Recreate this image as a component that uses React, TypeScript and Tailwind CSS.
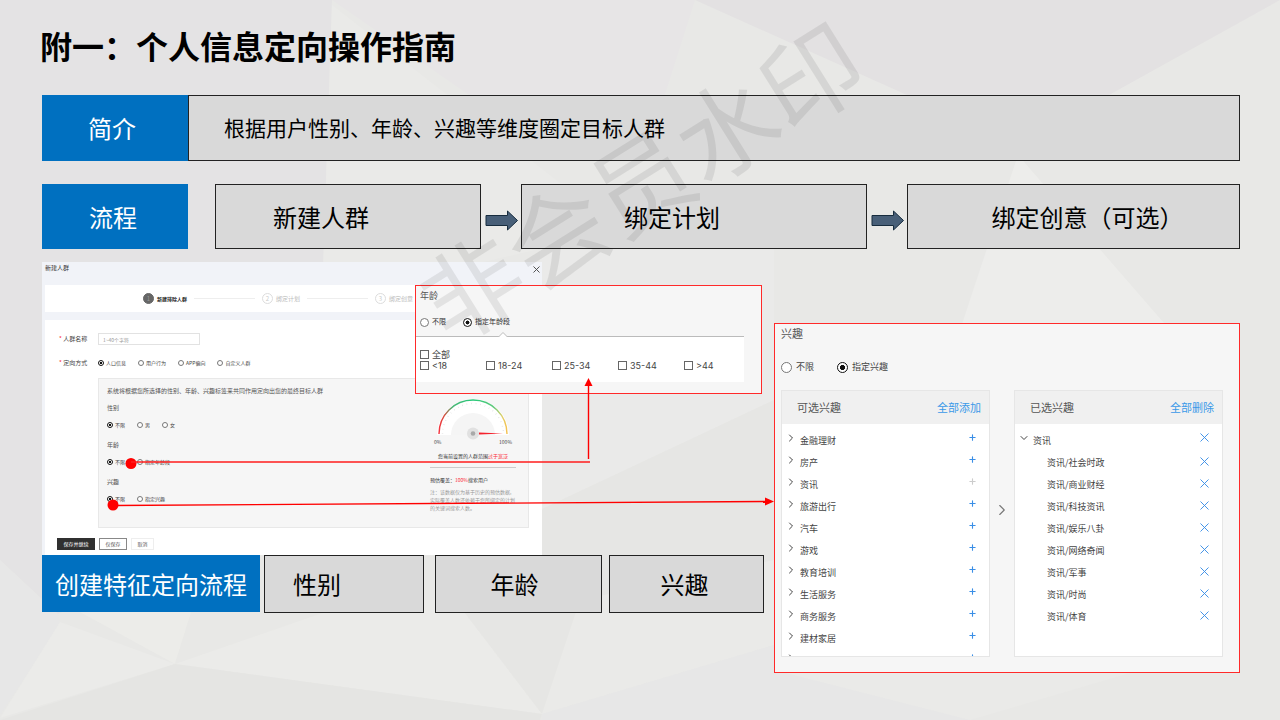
import React from "react";

import { ChevronDown, ChevronRight, Plus, X } from "lucide-react";

const interests = [
  "金融理财",
  "房产",
  "资讯",
  "旅游出行",
  "汽车",
  "游戏",
  "教育培训",
  "生活服务",
  "商务服务",
  "建材家居",
  "休闲娱乐",
];

const selectedInterests = [
  "社会时政",
  "商业财经",
  "科技资讯",
  "娱乐八卦",
  "网络奇闻",
  "军事",
  "时尚",
  "体育",
];

const ages = ["<18", "18-24", "25-34", "35-44", ">44"];

type RadioSize = "sm" | "md" | "lg";

const radioStyles: Record<RadioSize, { label: string; input: string }> = {
  sm: { label: "gap-[2px] text-[5px] leading-[8px] text-[#444]", input: "w-[6px] h-[6px]" },
  md: { label: "gap-[3px] text-[7px] leading-[10px] text-[#333]", input: "w-[9px] h-[9px]" },
  lg: { label: "gap-1 text-[9px] leading-[14px] text-[#444]", input: "w-[11px] h-[11px]" },
};

function RadioGroup({
  name,
  options,
  checked,
  size = "sm",
  className = "gap-3",
}: {
  name: string;
  options: string[];
  checked: string;
  size?: RadioSize;
  className?: string;
}) {
  return (
    <div className={`flex items-center ${className}`}>
      {options.map((option) => (
        <label key={option} className={`flex items-center ${radioStyles[size].label}`}>
          <input
            type="radio"
            name={name}
            defaultChecked={option === checked}
            className={`appearance-none shrink-0 rounded-full border border-[#777] bg-white checked:border-[#111] checked:bg-[radial-gradient(circle,#111_35%,#fff_45%)] ${radioStyles[size].input}`}
          />
          {option}
        </label>
      ))}
    </div>
  );
}

function CheckBox({ label }: { label: string }) {
  return (
    <label className="flex items-center gap-[3px] text-[9px] leading-[11px] text-[#444]">
      <input
        type="checkbox"
        className="appearance-none shrink-0 w-[9px] h-[9px] border border-[#666] bg-white"
      />
      {label}
    </label>
  );
}

function Background() {
  return (
    <svg
      className="absolute inset-0 w-full h-full -z-10"
      viewBox="0 0 1280 720"
      preserveAspectRatio="none"
      aria-hidden="true"
    >
      <rect width="1280" height="720" fill="#e8e8e6" />
      <polygon points="0,0 332,0 322,300 160,560 58,614 0,560" fill="#e4e3e4" />
      <polygon points="332,0 695,0 660,110 469,95" fill="#e7e5e6" />
      <polygon points="332,5 620,230 322,300" fill="#eaeae8" />
      <polygon points="695,0 1280,0 1109,95 1018,150 907,95" fill="#e3e1e2" />
      <polygon points="1018,155 1170,330 960,330" fill="#ededeb" />
      <polygon points="540,180 774,210 774,400 540,510" fill="#eaeae9" />
      <polygon points="540,510 774,400 774,645 542,600" fill="#e6e6e4" />
      <polygon points="0,560 58,614 60,625 0,715" fill="#e7e7e7" />
      <polygon points="58,600 195,600 175,664" fill="#ecece9" />
      <polygon points="60,622 175,664 0,718" fill="#ebebe9" />
      <polygon points="195,600 360,600 175,664" fill="#e8e8e6" />
      <polygon points="360,600 455,600 542,714 175,664" fill="#ebebe9" />
      <polygon points="175,664 542,714 540,720 0,720" fill="#e5e5e3" />
      <polygon points="455,600 580,600 542,714" fill="#e6e6e4" />
      <polygon points="580,600 774,560 774,645 542,714" fill="#eaeae8" />
      <polygon points="542,714 774,645 970,720 542,720" fill="#e7e7e7" />
      <polygon points="774,670 1140,670 970,720" fill="#eaeae8" />
    </svg>
  );
}

function BlockArrow() {
  return (
    <svg
      className="w-[33px] h-[21px] justify-self-center mt-2"
      viewBox="0 0 33 21"
      aria-hidden="true"
    >
      <path
        d="M1 5.5H22.5V1L32.5 10.5L22.5 20V15.5H1Z"
        fill="#485f78"
        stroke="#172c3e"
        strokeWidth="1"
      />
    </svg>
  );
}

function Gauge() {
  return (
    <svg className="w-[76px] h-10 overflow-visible" viewBox="0 0 76 40" aria-hidden="true">
      <defs>
        <linearGradient id="arc" x1="0" x2="1" y1="0" y2="0">
          <stop offset="0" stopColor="#f5333f" />
          <stop offset="0.08" stopColor="#d4503f" />
          <stop offset="0.2" stopColor="#4cb878" />
          <stop offset="0.5" stopColor="#25c878" />
          <stop offset="0.8" stopColor="#5fc97c" />
          <stop offset="0.93" stopColor="#e0cf6a" />
          <stop offset="1" stopColor="#f5c04f" />
        </linearGradient>
      </defs>
      <path d="M2 37A36 36 0 0 1 74 37Z" fill="#fff" />
      <path d="M16 37A22 22 0 0 1 60 37Z" fill="#f5f5f5" />
      <path
        d="M7.5 36A30.5 30.5 0 0 1 68.5 36"
        fill="none"
        stroke="#ddd"
        strokeWidth="1.5"
        strokeDasharray="0.6 4"
      />
      <path d="M4 36A34 34 0 0 1 72 36" fill="none" stroke="url(#arc)" strokeWidth="1.4" />
      <circle cx="38" cy="35.5" r="6" fill="#e1e1e1" />
      <circle cx="38" cy="35.5" r="2.3" fill="#a9a9a9" />
      <path d="M44 34.5L68 35.5L44 36.5Z" fill="#f5222d" />
    </svg>
  );
}

function Step({ no, label, active }: { no: number; label: string; active?: boolean }) {
  return (
    <div className="flex items-center gap-[3px] shrink-0">
      <span
        className={`flex items-center justify-center w-[11px] h-[11px] rounded-full border text-[6px] leading-[6px] ${
          active ? "bg-[#666] border-[#666] text-[#999]" : "border-[#ddd] text-[#ccc]"
        }`}
      >
        {no}
      </span>
      <span
        className={`leading-[8px] ${
          active ? "text-[5px] font-bold text-[#222]" : "text-[6px] text-[#bbb]"
        }`}
      >
        {label}
      </span>
    </div>
  );
}

function CrowdDialog() {
  return (
    <div className="w-[500px] h-[293px] flex flex-col pl-[3px] bg-[#f1f3f8] text-[6px] leading-[8px] text-[#555]">
      <div className="h-[23px] flex items-start justify-between pt-[2px]">
        <h2 className="text-[#333]">新建人群</h2>
        <button type="button" aria-label="关闭" className="text-[#444]">
          <X className="w-[11px] h-[11px]" strokeWidth={2} />
        </button>
      </div>
      <div className="h-[27px] mb-2 flex items-center gap-[7px] pl-[98px] bg-white overflow-hidden">
        <Step no={1} label="新建排除人群" active />
        <span className="w-[61px] h-px bg-[#eee]" />
        <Step no={2} label="绑定计划" />
        <span className="w-[61px] h-px bg-[#eee]" />
        <Step no={3} label="绑定创意" />
      </div>
      <div className="flex-1 flex flex-col bg-white pl-3 pr-[13px]">
        <div className="flex items-center h-3 mt-[13px]">
          <label htmlFor="crowd-name" className="w-[41px] pl-[2px] text-[#444]">
            <span className="text-red-500">*</span> 人群名称
          </label>
          <input
            id="crowd-name"
            placeholder="1~40个字符"
            className="w-[102px] h-3 px-1 border border-[#e2e2e2] text-[5px] placeholder:text-[#999]"
          />
        </div>
        <div className="flex items-center h-3 mt-3">
          <span className="w-[41px] pl-[2px] text-[#444]">
            <span className="text-red-500">*</span> 定向方式
          </span>
          <RadioGroup
            name="method"
            options={["人口信息", "用户行为", "APP偏向", "自定义人群"]}
            checked="人口信息"
          />
        </div>
        <div className="ml-[41px] mt-[9px] h-[150px] flex justify-between pl-2 pr-3 bg-[#f6f6f6] border border-[#e8e8e8]">
          <div className="flex flex-col pt-2">
            <p className="mb-[9px]">系统将根据您所选择的性别、年龄、兴趣标签来共同作用定向出您的最终目标人群</p>
            <h3 className="mb-[9px]">性别</h3>
            <RadioGroup name="sex" options={["不限", "男", "女"]} checked="不限" />
            <h3 className="mt-3 mb-[9px]">年龄</h3>
            <RadioGroup name="age" options={["不限", "指定年龄段"]} checked="不限" />
            <h3 className="mt-3 mb-[9px]">兴趣</h3>
            <RadioGroup name="interest" options={["不限", "指定兴趣"]} checked="不限" />
          </div>
          <div className="w-[86px] shrink-0 flex flex-col pt-[19px] text-[5px]">
            <div className="flex justify-center">
              <Gauge />
            </div>
            <div className="flex justify-between px-1 text-[#444]">
              <span>0%</span>
              <span>100%</span>
            </div>
            <p className="mt-[6px] text-center text-[#333]">
              您当前设置的人群范围<span className="text-red-500">过于宽泛</span>
            </p>
            <hr className="mt-[7px] mb-2 border-[#ccc]" />
            <p className="text-[#333]">
              预估覆盖：<span className="text-red-500">100%</span>搜索用户
            </p>
            <p className="mt-1 text-[#999]">
              注：该数据仅为基于历史的预估数据,
              <br />
              实际覆盖人数还依赖于您所绑定的计划
              <br />
              的关键词搜索人数。
            </p>
          </div>
        </div>
        <div className="flex gap-1 mt-[10px] text-[5px]">
          <button type="button" className="w-[38px] h-3 bg-[#303030] text-white">
            保存并继续
          </button>
          <button type="button" className="w-[28px] h-3 border border-[#888]">
            仅保存
          </button>
          <button type="button" className="w-[23px] h-3 border border-[#eee]">
            取消
          </button>
        </div>
      </div>
    </div>
  );
}

function AgePanel() {
  return (
    <div className="absolute left-[373px] top-[23px] w-[347px] h-[109px] flex flex-col bg-[#f6f6f6] border border-[#ff2a2a] font-[Inter,'Noto_Sans_CJK_SC',sans-serif]">
      <h3 className="pl-1 pt-1 text-[9px] leading-[12px] text-[#555]">年龄</h3>
      <div className="pl-1 pt-[15px]">
        <RadioGroup
          name="age-range"
          options={["不限", "指定年龄段"]}
          checked="指定年龄段"
          size="md"
          className="gap-[17px]"
        />
      </div>
      <div className="relative w-[328px] h-[46px] mt-[9px] pl-1 pt-3 bg-white border-t border-[#bbb]">
        <svg
          className="absolute left-[82px] -top-[5px] w-[10px] h-[6px]"
          viewBox="0 0 10 6"
          aria-hidden="true"
        >
          <path d="M0.5 5L5 0.5L9.5 5" fill="#fff" stroke="#bbb" />
          <path d="M1 5.5H9" stroke="#fff" />
        </svg>
        <CheckBox label="全部" />
        <div className="grid grid-cols-[repeat(5,66px)]">
          {ages.map((age) => (
            <CheckBox key={age} label={age} />
          ))}
        </div>
      </div>
    </div>
  );
}

function ListHeader({ title, action }: { title: string; action: string }) {
  return (
    <div className="flex items-center justify-between h-[33px] shrink-0 pl-[15px] pr-2 bg-[#f0f0f0] text-[11px] leading-[15px] text-[#555]">
      <h4>{title}</h4>
      <button type="button" className="text-[#3a99e8]">
        {action}
      </button>
    </div>
  );
}

function InterestPanel() {
  return (
    <div className="flex-1 h-[350px] mt-[61px] flex flex-col pl-[6px] pr-4 bg-[#f6f6f6] border border-[#ff2a2a]">
      <h3 className="pt-px text-[11px] leading-[16px] text-[#555]">兴趣</h3>
      <div className="mt-[19px]">
        <RadioGroup
          name="interest-range"
          options={["不限", "指定兴趣"]}
          checked="指定兴趣"
          size="lg"
          className="gap-[23px]"
        />
      </div>
      <div className="flex mt-4 text-[9px] leading-[14px] text-[#444]">
        <div className="flex-1 h-[267px] flex flex-col overflow-hidden bg-white border border-[#e6e6e6]">
          <ListHeader title="可选兴趣" action="全部添加" />
          <ul className="pt-[6px]">
            {interests.map((item) => (
              <li key={item} className="flex items-start h-[22px] pl-[3px] pr-3">
                <ChevronRight className="w-3 h-3 mt-[2px] mr-[3px]" strokeWidth={2} />
                <span className="flex-1 pt-1">{item}</span>
                <button
                  type="button"
                  aria-label={`添加${item}`}
                  className={`pt-[3px] ${item === "资讯" ? "text-[#ccc]" : "text-[#3a8ee6]"}`}
                >
                  <Plus className="w-[9px] h-[9px]" strokeWidth={3} />
                </button>
              </li>
            ))}
          </ul>
        </div>
        <div className="w-6 flex items-center justify-center pb-7">
          <ChevronRight className="w-[18px] h-[18px] text-[#777]" strokeWidth={1.5} />
        </div>
        <div className="flex-1 h-[267px] flex flex-col overflow-hidden bg-white border border-[#e6e6e6]">
          <ListHeader title="已选兴趣" action="全部删除" />
          <ul className="pt-[6px]">
            <li className="flex items-start h-[22px] pl-[3px] pr-[10px]">
              <ChevronDown className="w-3 h-3 mt-[2px] mr-[3px]" strokeWidth={2} />
              <span className="flex-1 pt-1">资讯</span>
              <button type="button" aria-label="删除资讯" className="text-[#3a8ee6]">
                <X className="w-[15px] h-[15px]" strokeWidth={1.5} />
              </button>
            </li>
            {selectedInterests.map((item) => (
              <li key={item} className="flex items-start h-[22px] pl-8 pr-[10px]">
                <span className="flex-1 pt-1">资讯/{item}</span>
                <button type="button" aria-label={`删除${item}`} className="text-[#3a8ee6]">
                  <X className="w-[15px] h-[15px] mt-[2px]" strokeWidth={1.5} />
                </button>
              </li>
            ))}
          </ul>
        </div>
      </div>
    </div>
  );
}

// red lines that lead from the dialog options to the two detail panels
function Connectors() {
  return (
    <svg
      className="absolute left-0 top-0 w-[734px] h-[293px] pointer-events-none"
      viewBox="0 0 734 293"
      fill="#f00"
      aria-hidden="true"
    >
      <circle cx="89" cy="201.5" r="5.5" />
      <path d="M89 200H548" stroke="#ff1c1c" strokeWidth="1.4" />
      <path d="M546.5 197V124" stroke="#f00" strokeWidth="1.4" />
      <path d="M546.5 116L550.5 124H542.5Z" />
      <circle cx="71" cy="243" r="5.5" />
      <path d="M71 243.5L724 239.5" stroke="#f00" strokeWidth="1.4" />
      <path d="M732 239.5L723 235.5V243.5Z" />
    </svg>
  );
}

export default function App() {
  return (
    <main className="relative isolate min-h-screen overflow-hidden pl-[42px] pr-10 pb-11 text-black font-['Noto_Sans_CJK_SC','Liberation_Sans',sans-serif]">
      <Background />

      <h1 className="-ml-[2px] pt-[22px] text-[32px] leading-[46px] font-bold">
        附一：个人信息定向操作指南
      </h1>

      <section className="flex h-[66px] mt-[27px]">
        <h2 className="w-[146px] shrink-0 flex items-center justify-center pr-[6px] bg-[#0070c0] text-white text-[24px]">
          简介
        </h2>
        <p className="flex-1 flex items-center pl-[35px] bg-[#d9d9d9] border border-[#222] text-[21px]">
          根据用户性别、年龄、兴趣等维度圈定目标人群
        </p>
      </section>

      <section className="grid grid-cols-[146px_27px_266fr_40px_346fr_40px_333fr] items-center h-[65px] mt-[23px] text-[24px]">
        <h2 className="h-[65px] flex items-center justify-center pr-1 bg-[#0070c0] text-white">
          流程
        </h2>
        <span />
        <div className="h-[65px] flex items-center pl-[57px] bg-[#d9d9d9] border border-[#222]">
          新建人群
        </div>
        <BlockArrow />
        <div className="h-[65px] flex items-center justify-center pr-11 bg-[#d9d9d9] border border-[#222]">
          绑定计划
        </div>
        <BlockArrow />
        <div className="h-[65px] flex items-center justify-center pl-7 bg-[#d9d9d9] border border-[#222]">
          绑定创意（可选）
        </div>
      </section>

      <section className="relative flex mt-[13px]">
        <div className="w-[722px] shrink-0 mr-[10px]">
          <CrowdDialog />
          <div className="flex h-[58px] text-[24px]">
            <h2 className="w-[218px] h-[57px] flex items-center justify-center bg-[#0070c0] text-white">
              创建特征定向流程
            </h2>
            <div className="w-[160px] flex items-center ml-1 pl-7 bg-[#d9d9d9] border border-[#222]">
              性别
            </div>
            <div className="w-[167px] flex items-center justify-center ml-[11px] pr-2 bg-[#d9d9d9] border border-[#222]">
              年龄
            </div>
            <div className="w-[155px] flex items-center justify-center ml-[7px] pr-1 bg-[#d9d9d9] border border-[#222]">
              兴趣
            </div>
          </div>
        </div>
        <InterestPanel />
        <AgePanel />
        <Connectors />
      </section>

      <div className="absolute left-[384px] top-[128px] w-[510px] -rotate-[32deg] text-center text-[100px] leading-[100px] text-black/[0.08] whitespace-nowrap pointer-events-none select-none">
        非会员水印
      </div>
    </main>
  );
}
